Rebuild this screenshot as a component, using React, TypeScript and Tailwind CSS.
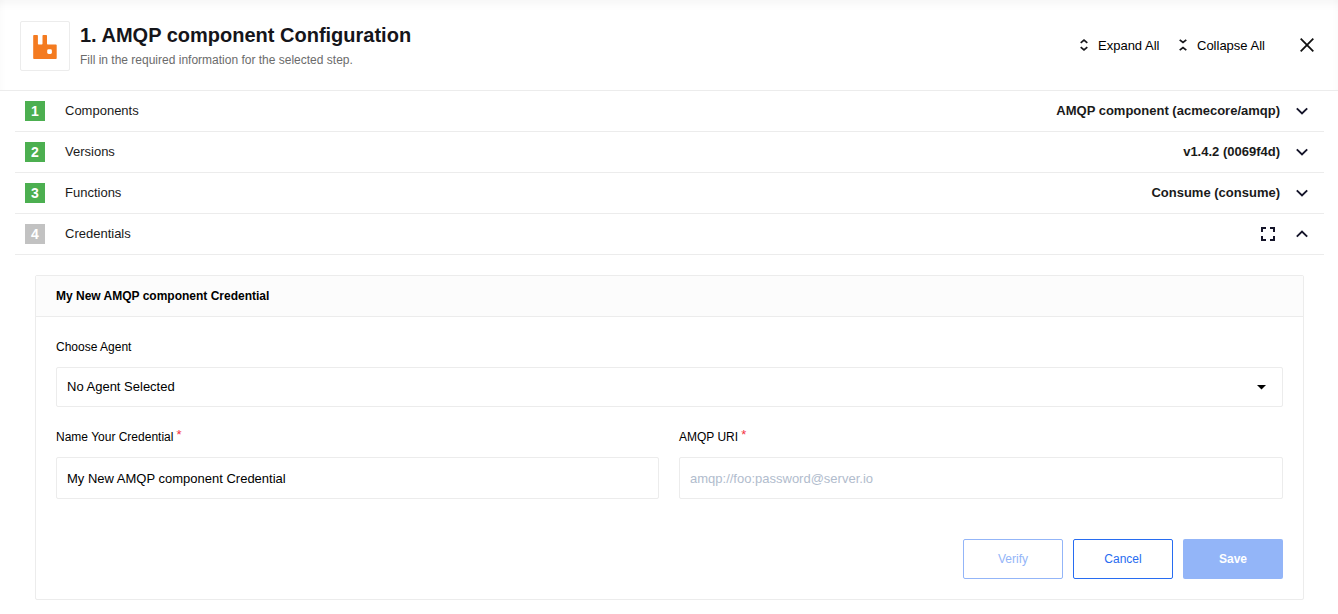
import React from "react";

const steps = [
  { n: 1, label: "Components", value: "AMQP component (acmecore/amqp)" },
  { n: 2, label: "Versions", value: "v1.4.2 (0069f4d)" },
  { n: 3, label: "Functions", value: "Consume (consume)" },
  { n: 4, label: "Credentials", value: "" },
];

function Chevron({ up }: { up?: boolean }) {
  return (
    <svg width="12" height="8" viewBox="0 0 12 8" fill="none" stroke="#15152a" strokeWidth="1.9">
      <path d={up ? "M0.8 6.7 6 1.5 11.2 6.7" : "M0.8 1.3 6 6.5 11.2 1.3"} />
    </svg>
  );
}

function Logo() {
  return (
    <svg className="mt-px" width="24" height="24" viewBox="0 0 24 24">
      <path
        fill="#f47b20"
        d="M1 0h3.2q.7 0 .7.7v8q0 .8.8.8h3q.8 0 .8-.8v-8q0-.7.7-.7h3.1q.7 0 .7.7v8q0 .8.8.8h8.1q.8 0 .8.8v12.900q0 .8-.8.8H1q-.8 0-.8-.8V.7Q.2 0 1 0Z"
      />
      <rect x="14.2" y="14.3" width="4.700" height="4.700" rx="1.4" fill="#fff" />
    </svg>
  );
}

function Required() {
  return <span className="relative -top-0.5 ml-[3px] text-[13px] text-[#f3323f]">*</span>;
}

export default function App() {
  return (
    <div className="h-[614px] w-[1338px] overflow-hidden bg-white font-['Liberation_Sans',Arial,sans-serif] text-[13px] text-black">
      <header className="flex h-[91px] items-start border-b border-[#ececec] pt-[21px] pr-6 pl-5 shadow-[inset_0_12px_12px_-10px_rgba(0,0,0,0.05),inset_8px_0_8px_-8px_rgba(0,0,0,0.03),inset_-8px_0_8px_-8px_rgba(0,0,0,0.03)]">
        <div className="flex size-[50px] items-center justify-center rounded-[2px] border border-[#ececec] bg-white">
          <Logo />
        </div>
        <div className="ml-[10px] flex-1">
          <h1 className="text-[20px] leading-7 font-bold whitespace-nowrap text-[#15151a]">1. AMQP component Configuration</h1>
          <p className="mt-px text-[12px] leading-5 text-[#6b6b6b]">Fill in the required information for the selected step.</p>
        </div>
        <div className="flex h-12 items-center">
          <svg width="8" height="12" viewBox="0 0 8 12" fill="none" stroke="#15151a" strokeWidth="1.7">
            <path d="M.7 3.8 4 1.1 7.3 3.8M.7 8.2 4 10.9 7.3 8.2" />
          </svg>
          <span className="mt-0.5 ml-[10px] w-[62px] whitespace-nowrap">Expand All</span>
          <svg className="ml-[19px]" width="8" height="12" viewBox="0 0 8 12" fill="none" stroke="#15151a" strokeWidth="1.7">
            <path d="M.7.8 4 3.5 7.3.8M.7 11.2 4 8.5 7.3 11.2" />
          </svg>
          <span className="mt-0.5 ml-[10px] w-[69px] whitespace-nowrap">Collapse All</span>
          <svg className="ml-[34px]" width="14" height="14" viewBox="0 0 14 14" fill="none" stroke="#111" strokeWidth="1.8">
            <path d="M.7.7 13.3 13.3M13.3.7.7 13.3" />
          </svg>
        </div>
      </header>

      <main className="px-[15px]">
        {steps.map((s) => (
          <div key={s.n} className="flex h-[41px] w-[1309px] items-center border-b border-[#ececec] pr-4 pl-[10px]">
            <span className={`flex size-5 items-center justify-center text-[14px] leading-5 font-bold text-white ${s.n === 4 ? "bg-[#c2c2c2]" : "bg-[#4caf50]"}`}>{s.n}</span>
            <span className="ml-5 flex-1 text-[#1a1a1a]">{s.label}</span>
            {s.value ? (
              <span className="font-bold text-[#1a1a1a]">{s.value}</span>
            ) : (
              <svg className="mr-[5px]" width="14" height="14" viewBox="0 0 14 14" fill="none" stroke="#15152a" strokeWidth="2">
                <path d="M1 5V1H5M9 1H13V5M13 9V13H9M5 13H1V9" />
              </svg>
            )}
            <span className="ml-4">
              <Chevron up={s.n === 4} />
            </span>
          </div>
        ))}

        <section className="mt-5 ml-5 h-[325px] w-[1269px] rounded-[2px] border border-[#ececec]">
          <h2 className="h-[41px] border-b border-[#ececec] bg-[#fcfcfc] pl-5 text-[12px] leading-10 font-bold">My New AMQP component Credential</h2>
          <div className="px-5 pt-5">
            <label className="block text-[12px] leading-5">Choose Agent</label>
            <div className="mt-[10px] flex h-10 items-center justify-between rounded-[2px] border border-[#ececec] pr-4 pl-[10px]">
              <span>No Agent Selected</span>
              <svg width="9" height="5" viewBox="0 0 9 5">
                <path d="M0 0H9L4.5 4.5Z" fill="#000" />
              </svg>
            </div>
            <div className="mt-5 grid grid-cols-[603px_604px] gap-5">
              <div>
                <label className="block h-5 text-[12px] leading-5">
                  Name Your Credential
                  <Required />
                </label>
                <div className="mt-[10px] flex h-[42px] items-center rounded-[2px] border border-[#ececec] px-[10px] pt-0.5">My New AMQP component Credential</div>
              </div>
              <div>
                <label className="block h-5 text-[12px] leading-5">
                  AMQP URI
                  <Required />
                </label>
                <div className="mt-[10px] flex h-[42px] items-center rounded-[2px] border border-[#ececec] px-[10px] pt-0.5 text-[#b1bccd]">amqp://foo:password@server.io</div>
              </div>
            </div>
            <div className="mt-10 flex justify-end gap-[10px] text-[12px]">
              <button className="h-10 w-[100px] rounded-[2px] border border-[#93b5f8] text-[#93b5f8]">Verify</button>
              <button className="h-10 w-[100px] rounded-[2px] border border-[#276cf1] text-[#276cf1]">Cancel</button>
              <button className="h-10 w-[100px] rounded-[2px] bg-[#93b5f8] font-bold text-white">Save</button>
            </div>
          </div>
        </section>
      </main>
    </div>
  );
}
